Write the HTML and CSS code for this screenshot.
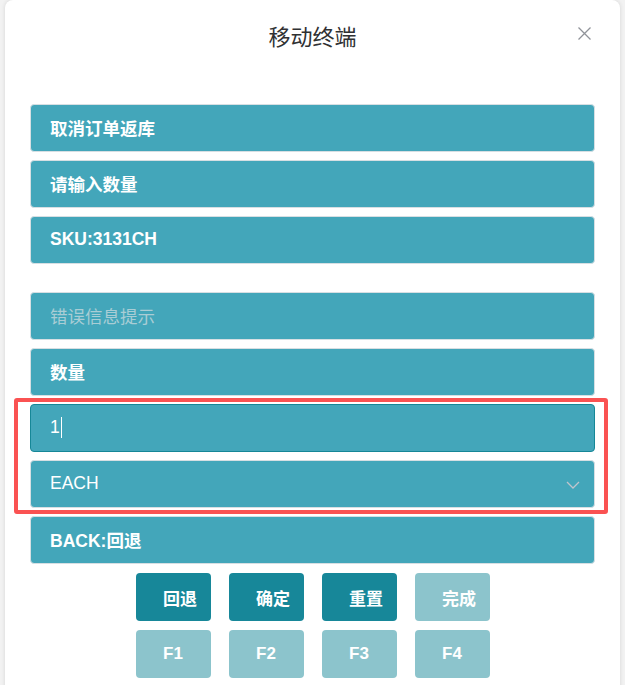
FILE: index.html
```html
<!DOCTYPE html>
<html lang="zh">
<head>
<meta charset="utf-8">
<title>移动终端</title>
<link rel="stylesheet" href="styles.css">
</head>
<body>
<div class="page">
  <div class="dialog">
    <div class="header">
      <span class="title">移动终端</span>
      <span class="close">
        <svg width="13" height="13" viewBox="0 0 13 13"><path d="M0.5 0.5 L12.5 12.5 M12.5 0.5 L0.5 12.5" stroke="#909399" stroke-width="1.3" fill="none"/></svg>
      </span>
    </div>
    <div class="fields">
      <div class="field">取消订单返库</div>
      <div class="field">请输入数量</div>
      <div class="field">SKU:3131CH</div>
    </div>
    <div class="fields second">
      <div class="field placeholder">错误信息提示</div>
      <div class="field">数量</div>
      <div class="highlight-group">
        <div class="field focused">1<span class="caret"></span></div>
        <div class="field select">EACH
          <svg class="chev" width="14" height="8" viewBox="0 0 14 8"><path d="M1 1 L7 7 L13 1" stroke="#c0c4cc" stroke-width="1.3" fill="none"/></svg>
        </div>
        <div class="annot"></div>
      </div>
      <div class="field">BACK:回退</div>
    </div>
    <div class="buttons">
      <div class="btn dark">回退</div>
      <div class="btn dark">确定</div>
      <div class="btn dark">重置</div>
      <div class="btn light shift">完成</div>
      <div class="btn light">F1</div>
      <div class="btn light">F2</div>
      <div class="btn light">F3</div>
      <div class="btn light">F4</div>
    </div>
  </div>
</div>
</body>
</html>
```
FILE: styles.css
```css
html, body {
  margin: 0;
  padding: 0;
  background: #f2f2f2;
  font-family: "Liberation Sans", "Noto Sans CJK SC", sans-serif;
}
.page {
  padding: 0 5px;
  height: 685px;
  overflow: hidden;
}
.dialog {
  background: #fff;
  border-radius: 8px;
  box-shadow: 0 0 4px rgba(0,0,0,0.12);
  padding: 0 25px 20px;
  height: 700px;
  box-sizing: border-box;
}
.header {
  position: relative;
  height: 104px;
  display: flex;
  justify-content: center;
  padding-top: 20px;
  box-sizing: border-box;
}
.title {
  font-family: "Noto Sans CJK SC", sans-serif;
  font-size: 22px;
  line-height: 30px;
  color: #303133;
}
.close {
  position: absolute;
  right: 4px;
  top: 27px;
  width: 13px;
  height: 13px;
  display: flex;
}
.fields {
  display: flex;
  flex-direction: column;
  gap: 8px;
}
.fields.second {
  margin-top: 28px;
}
.field {
  height: 48px;
  box-sizing: border-box;
  background: #43a6ba;
  border: 1px solid #d7dfe3;
  border-radius: 4px;
  padding: 0 19px 2px;
  display: flex;
  align-items: center;
  color: #fff;
  font-size: 17.5px;
  font-weight: bold;
  position: relative;
}
.field.placeholder {
  color: #a9cdd5;
  font-weight: normal;
}
.field.focused {
  border-color: #168797;
  font-weight: normal;
}
.field.select {
  font-weight: normal;
}
.caret {
  display: inline-block;
  width: 1px;
  height: 21px;
  background: #fff;
  margin-left: 1px;
}
.chev {
  position: absolute;
  right: 14px;
  top: 20px;
}
.highlight-group {
  position: relative;
  display: flex;
  flex-direction: column;
  gap: 8px;
}
.annot {
  position: absolute;
  left: -16px;
  right: -13px;
  top: -6px;
  bottom: -6px;
  border: 4px solid #fa5252;
  border-radius: 3px;
  pointer-events: none;
}
.buttons {
  margin-top: 9px;
  display: grid;
  grid-template-columns: repeat(4, 75px);
  column-gap: 18px;
  row-gap: 9px;
  justify-content: center;
}
.btn {
  height: 48px;
  border-radius: 4px;
  display: flex;
  align-items: center;
  justify-content: center;
  color: #fff;
  font-size: 17px;
  font-weight: bold;
  box-sizing: border-box;
}
.btn.dark {
  background: #178799;
  padding-left: 14px;
}
.btn.shift {
  padding-left: 14px;
}
.btn.light {
  background: #8cc4cc;
}
```
